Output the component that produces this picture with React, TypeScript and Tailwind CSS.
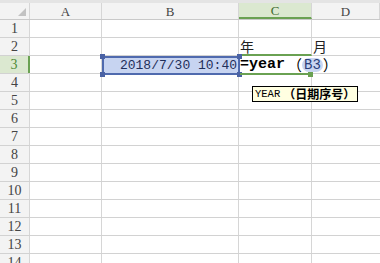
import React from "react";

const COLS = [
  { key: "A", w: 72 },
  { key: "B", w: 137 },
  { key: "C", w: 73 },
  { key: "D", w: 68 },
];

const ROWS = Array.from({ length: 14 }, (_, i) => i + 1);

const mono = { fontFamily: '"Liberation Mono", "Noto Sans CJK SC", monospace' };
const serif = { fontFamily: '"Liberation Serif", "Noto Sans CJK SC", serif' };

function Handle({ className }: { className: string }) {
  return <div className={`absolute w-[5px] h-[5px] bg-[#4a62a4] ${className}`} />;
}

export default function App() {
  return (
    <div className="relative w-[380px] h-[263px] overflow-hidden bg-white text-[#222]">
      <div className="h-[3px] bg-[#e4e4e4]" />
      {/* column headers */}
      <div className="flex h-[17px] bg-[#f3f3f3] border-b border-[#c9c9c9]">
        <div className="relative w-[30px] border-r border-[#d6d6d6]">
          <div className="absolute right-[3px] bottom-[3px] w-0 h-0 border-l-[8px] border-l-transparent border-b-[8px] border-b-[#c2c2c2]" />
        </div>
        {COLS.map((c) => (
          <div
            key={c.key}
            style={{ width: c.w, ...serif }}
            className={`flex items-center justify-center text-[13px] leading-none border-r border-[#d6d6d6] ${
              c.key === "C" ? "bg-[#dbe8d0] text-[#3f6b2e] border-b-2 border-b-[#6aa152]" : "text-[#444]"
            }`}
          >
            {c.key}
          </div>
        ))}
      </div>
      {/* rows */}
      {ROWS.map((r) => (
        <div key={r} className="flex h-[18px] border-b border-[#d2d2d2]">
          <div
            style={serif}
            className={`w-[30px] flex items-center justify-center text-[14px] leading-none ${
              r === 3
                ? "bg-[#dbe8d0] text-[#4d8a36] border-r-2 border-[#6aa152]"
                : "bg-[#f3f3f3] text-[#444] border-r border-[#d6d6d6]"
            }`}
          >
            {r}
          </div>
          <div className="w-[72px] border-r border-[#d6d6d6]" />
          <div className="w-[137px] border-r border-[#d6d6d6]" />
          <div
            className={`relative w-[73px] ${r === 3 ? "" : "border-r border-[#d6d6d6]"} ${
              r === 2 ? "border-b-2 border-b-[#6aa152] -mb-px" : ""
            }`}
          >
            {r === 2 && (
              <span
                className="absolute left-[1px] top-[1px] text-[14px] leading-none"
                style={{ fontFamily: '"Noto Sans CJK SC", sans-serif' }}
              >
                年
              </span>
            )}
            {r === 3 && (
              <div className="absolute left-[1px] top-0 h-[17px] flex items-center whitespace-nowrap text-[15px] leading-none text-black" style={mono}>
                <span className="font-bold">=year</span>
                <span className="ml-[2px]" style={{ fontFamily: '"Noto Sans CJK SC", sans-serif' }}>（</span>
                <span className="px-[2px] rounded-full bg-[#c9d6f2] text-[#2b3f7a] text-[14px]">B3</span>
                <span style={{ fontFamily: '"Noto Sans CJK SC", sans-serif' }}>）</span>
              </div>
            )}
          </div>
          <div className="relative flex-1">
            {r === 2 && (
              <span
                className="absolute left-[1px] top-[1px] text-[14px] leading-none"
                style={{ fontFamily: '"Noto Sans CJK SC", sans-serif' }}
              >
                月
              </span>
            )}
          </div>
        </div>
      ))}

      {/* selected reference range B3 */}
      <div className="absolute left-[102px] top-[56px] w-[138px] h-[19px] border-2 border-[#4f6aae] bg-[#c7d4f1] flex items-center justify-end pr-[1px]">
        <span className="text-[13px] leading-none text-[#1f2f5a]" style={mono}>
          2018/7/30 10:40
        </span>
      </div>
      <Handle className="left-[100px] top-[54px]" />
      <Handle className="left-[100px] top-[72px]" />
      <Handle className="left-[237px] top-[54px]" />
      <Handle className="left-[237px] top-[72px]" />

      {/* active cell C3 outline */}
      <div className="absolute left-[240px] top-[73px] w-[70px] h-[2px] bg-[#6aa152]" />
      <div className="absolute left-[308px] top-[72px] w-[5px] h-[5px] bg-[#6aa152]" />

      {/* function hint */}
      <div className="absolute left-[252px] top-[86px] h-[16px] px-[2px] flex items-center border border-black bg-[#ffffe1] whitespace-nowrap leading-none text-black">
        <span className="text-[10.5px]" style={mono}>YEAR</span>
        <span
          className="ml-[3px] text-[12px] font-bold"
          style={{ fontFamily: '"Noto Sans CJK SC", sans-serif' }}
        >
          （日期序号）
        </span>
      </div>
    </div>
  );
}
